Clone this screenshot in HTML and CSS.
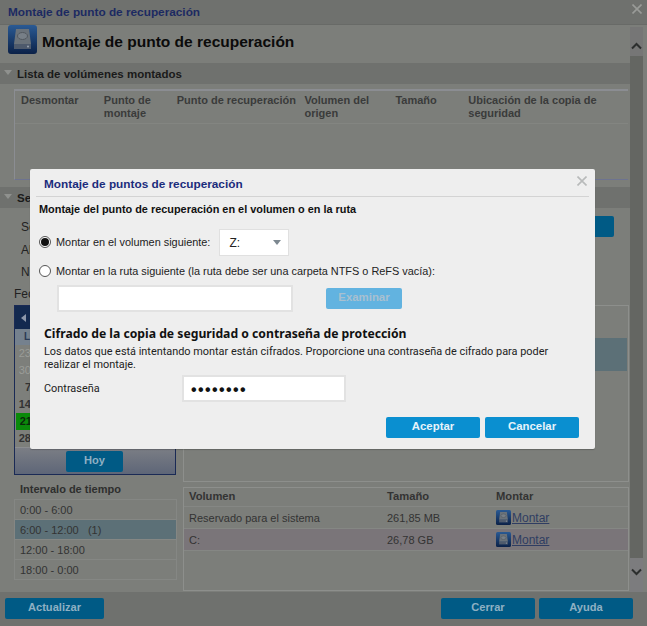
FILE: index.html
```html
<!DOCTYPE html>
<html lang="es">
<head>
<meta charset="utf-8">
<title>Montaje de punto de recuperación</title>
<link rel="stylesheet" href="styles.css">
</head>
<body>
<svg width="0" height="0" class="defs">
  <defs>
    <linearGradient id="ig" x1="0" y1="0" x2="0" y2="1"><stop offset="0" stop-color="#2a5a94"/><stop offset="1" stop-color="#0b2148"/></linearGradient>
    <symbol id="drive" viewBox="0 0 29 29">
      <rect width="29" height="29" rx="3" fill="url(#ig)"/>
      <path d="M8 4h13l2 15H6z" fill="#6a727a"/>
      <path d="M6 19h17v5H6z" fill="#4e5a6c"/>
      <ellipse cx="14.500" cy="11" rx="5" ry="3.500" fill="#777f87" stroke="#52585f"/>
      <circle cx="20" cy="21.500" r="1" fill="#9aa4b0"/>
    </symbol>
  </defs>
</svg>
<div class="window">
  <div class="titlebar">
    <span class="titlebar-text">Montaje de punto de recuperación</span>
    <svg class="close-x" width="10" height="10" viewBox="0 0 10 10"><path d="M.5 .5l9 9M9.500 .5l-9 9" stroke="#999b98" stroke-width="1.600"/></svg>
  </div>
  <div class="main">
    <div class="content">
      <div class="page-head">
        <svg class="page-icon" width="29" height="29"><use href="#drive"/></svg>
        <h1 class="page-title">Montaje de punto de recuperación</h1>
      </div>
      <div class="section-bar"><span class="tri"></span><span>Lista de volúmenes montados</span></div>
      <div class="mounted">
        <div class="mounted-head">
          <div class="c1">Desmontar</div>
          <div class="c2">Punto de montaje</div>
          <div class="c3">Punto de recuperación</div>
          <div class="c4">Volumen del origen</div>
          <div class="c5">Tamaño</div>
          <div class="c6">Ubicación de la copia de seguridad</div>
        </div>
      </div>
      <div class="section-bar second"><span class="tri"></span><span>Seleccionar</span></div>
      <div class="form-rows">
        <div class="form-row">Se<span class="form-btn"></span></div>
        <div class="form-row">Al</div>
        <div class="form-row">N</div>
      </div>
      <div class="browse">
        <div class="left-col">
          <div class="fec">Fecha</div>
          <div class="calendar">
            <div class="cal-head"><span class="cal-arrow"></span></div>
            <div class="cal-days">L</div>
            <div class="cal-row muted">23</div>
            <div class="cal-row muted">30</div>
            <div class="cal-row">7</div>
            <div class="cal-row">14</div>
            <div class="cal-row today">21</div>
            <div class="cal-row">28</div>
            <div class="cal-foot"><span class="btn-dim hoy">Hoy</span></div>
          </div>
          <div class="interval-title">Intervalo de tiempo</div>
          <div class="intervals">
            <div class="interval">0:00 - 6:00</div>
            <div class="interval selected">6:00 - 12:00 &nbsp; (1)</div>
            <div class="interval">12:00 - 18:00</div>
            <div class="interval">18:00 - 0:00</div>
          </div>
        </div>
        <div class="right-col">
          <div class="points"><div class="points-sel"></div></div>
          <div class="volumes">
            <div class="vol-row vol-head"><span class="v1">Volumen</span><span class="v2">Tamaño</span><span class="v3">Montar</span></div>
            <div class="vol-row"><span class="v1">Reservado para el sistema</span><span class="v2">261,85 MB</span><span class="v3 mount"><svg width="15" height="15"><use href="#drive"/></svg><u>Montar</u></span></div>
            <div class="vol-row alt"><span class="v1">C:</span><span class="v2">26,78 GB</span><span class="v3 mount"><svg width="15" height="15"><use href="#drive"/></svg><u>Montar</u></span></div>
          </div>
        </div>
      </div>
    </div>
    <div class="scrollbar">
      <div class="sb-btn up"><svg width="11" height="8" viewBox="0 0 11 8"><path d="M1 6.500l4.500-4.500 4.500 4.500" fill="none" stroke="#2c2e2e" stroke-width="2"/></svg></div>
      <div class="sb-thumb"></div>
      <div class="sb-btn down"><svg width="11" height="8" viewBox="0 0 11 8"><path d="M1 1.500l4.500 4.500 4.500-4.500" fill="none" stroke="#2c2e2e" stroke-width="2"/></svg></div>
    </div>
  </div>
  <div class="footer">
    <span class="btn-dim wide">Actualizar</span>
    <span class="footer-right"><span class="btn-dim wide">Cerrar</span><span class="btn-dim wide">Ayuda</span></span>
  </div>
</div>

<div class="modal">
  <div class="modal-head">
    <span class="modal-title">Montaje de puntos de recuperación</span>
    <svg class="modal-x" width="10" height="10" viewBox="0 0 10 10"><path d="M.5 .5l9 9M9.500 .5l-9 9" stroke="#b8baba" stroke-width="1.600"/></svg>
  </div>
  <div class="modal-sub">Montaje del punto de recuperación en el volumen o en la ruta</div>
  <div class="opt-vol">
    <span class="radio on"></span><span>Montar en el volumen siguiente:</span>
    <span class="select"><span>Z:</span><span class="caret"></span></span>
  </div>
  <div class="opt-path"><span class="radio"></span><span>Montar en la ruta siguiente (la ruta debe ser una carpeta NTFS o ReFS vacía):</span></div>
  <div class="path-row">
    <span class="text-box path-box"></span>
    <span class="btn disabled">Examinar</span>
  </div>
  <h2 class="enc-title">Cifrado de la copia de seguridad o contraseña de protección</h2>
  <p class="enc-text">Los datos que está intentando montar están cifrados. Proporcione una contraseña de cifrado para poder realizar el montaje.</p>
  <div class="pass-row">
    <span class="pass-label">Contraseña</span>
    <span class="text-box pass-box">••••••••</span>
  </div>
  <div class="modal-actions">
    <span class="btn">Aceptar</span>
    <span class="btn">Cancelar</span>
  </div>
</div>
</body>
</html>
```

FILE: styles.css
```css
* { box-sizing: border-box; }
html, body { margin: 0; height: 100%; overflow: hidden; }
body { font-family: "Liberation Sans", Arial, sans-serif; font-size: 11px; color: #333; background: #7c7e7a; }
.defs { position: absolute; }

.window { width: 647px; height: 626px; display: flex; flex-direction: column; background: #7c7e7a; }
.titlebar { height: 25px; flex: none; display: flex; align-items: center; justify-content: space-between; padding: 0 5px 0 8px; background: #6f716e; border-bottom: 1px solid #686a67; }
.titlebar-text { font-weight: 700; font-size: 11.800px; color: #1c2a62; }
.close-x { align-self: flex-start; margin-top: 4px; }
.main { flex: 1; min-height: 0; display: flex; padding-right: 4px; }
.content { flex: 1; min-width: 0; }

.page-head { height: 38px; display: flex; align-items: flex-start; gap: 5px; padding-left: 8px; }
.page-title { margin: 7px 0 0; font-size: 15.500px; line-height: 19px; font-weight: 700; color: #0b0b0b; }
.section-bar { height: 21px; display: flex; align-items: center; gap: 5px; padding-left: 4px; background: #6f716e; font-weight: 700; font-size: 11.500px; color: #1a1a1a; }
.section-bar.second { margin-top: 7px; }
.tri { width: 0; height: 0; border-left: 4px solid transparent; border-right: 4px solid transparent; border-top: 5px solid #8f918e; margin-top: -2px; }

.mounted { margin: 5px 2px 0 14px; height: 91px; border: 1px solid #8b8d92; border-top-width: 2px; border-bottom-color: #6d7390; border-right: 0; }
.mounted-head { height: 33px; display: flex; border-bottom: 1px solid #838581; padding-top: 3px; font-weight: 700; font-size: 11px; line-height: 13px; color: #3a3b3a; }
.c1 { width: 89px; padding-left: 6px; }
.c2 { width: 73px; }
.c3 { width: 128px; }
.c4 { width: 91px; padding-right: 20px; }
.c5 { width: 73px; }
.c6 { width: 160px; }

.form-rows { height: 98px; padding: 8px 0 0 21px; }
.form-row { height: 22.500px; line-height: 22px; display: flex; justify-content: space-between; color: #222; font-size: 12px; }
.form-btn { width: 60px; height: 21px; margin: 0 16px 0 0; background: #005a85; border-radius: 2px; }

.browse { display: flex; gap: 7px; margin-top: -1px; padding-right: 1px; }
.left-col { width: 162px; margin-left: 14px; position: relative; }
.fec { position: absolute; top: -18px; left: 0; color: #222; font-size: 12px; }
.calendar { height: 170px; border: 1px solid #1a2a55; display: flex; flex-direction: column; background: #7d7f7b; }
.cal-head { height: 23px; background: #13294f; display: flex; align-items: center; padding-left: 6px; }
.cal-arrow { width: 0; height: 0; border-top: 4px solid transparent; border-bottom: 4px solid transparent; border-right: 5px solid #8d97aa; }
.cal-days { height: 16px; background: #75818e; color: #2b3a55; font-size: 10px; font-weight: 700; line-height: 15px; padding-left: 9px; }
.cal-row { height: 17px; line-height: 17px; font-weight: 700; font-size: 11px; color: #333; text-align: right; padding-right: 144px; }
.cal-row.muted { color: #9a9c98; font-weight: 400; }
.cal-row.today { background: #0a8a0a; color: #0a2a0a; margin-left: 1px; padding-right: 143px; }
.cal-foot { flex: 1; display: flex; justify-content: center; align-items: center; background: linear-gradient(#7b7e85, #5e6678); border-top: 1px solid #8b8d90; padding-right: 1px; }
.btn-dim { display: flex; align-items: center; justify-content: center; height: 21px; padding-bottom: 3px; background: #005a85; border-radius: 2px; color: #8eb0c3; font-weight: 700; font-size: 11.100px; }
.hoy { width: 57px; }
.interval-title { margin: 7px 0 0 6px; height: 17px; line-height: 15px; font-weight: 700; font-size: 11px; color: #2e2f2e; }
.intervals { border: 1px solid #858784; border-bottom: 0; margin-right: -1px; }
.interval { height: 20px; line-height: 20px; padding-left: 5px; border-bottom: 1px solid #858784; color: #333; font-size: 11px; }
.interval.selected { background: #5c7077; }

.right-col { flex: 1; min-width: 0; display: flex; flex-direction: column; gap: 5px; }
.points { height: 177px; border: 1px solid #8d8f8c; padding-top: 32px; }
.points-sel { height: 33px; background: #5c7077; margin-right: 1px; }
.volumes { height: 104px; border: 1px solid #8d8f8c; }
.vol-row { height: 22px; display: flex; align-items: center; padding-left: 5px; border-bottom: 1px solid #858784; color: #333; font-size: 11px; }
.vol-head { height: 19px; font-weight: 700; font-size: 11.200px; padding-bottom: 2px; }
.vol-row.alt { background: #7a7579; }
.v1 { width: 198px; }
.v2 { width: 109px; }
.mount { display: flex; align-items: center; gap: 1px; color: #2f3d62; font-size: 12px; }

.scrollbar { width: 13px; margin-top: 2px; height: 565px; display: flex; flex-direction: column; }
.sb-btn { background: #7f7f7f; display: flex; justify-content: center; }
.sb-btn.up { height: 29px; padding-top: 15px; background: #767676; }
.sb-btn.down { height: 34px; padding-top: 10px; background: #7c7c7e; }
.sb-thumb { flex: 1; background: #646662; }

.footer { height: 34px; flex: none; display: flex; justify-content: space-between; padding: 6px 14px 0 5px; background: #6f716e; }
.footer-right { display: flex; gap: 4px; }
.wide { width: 99px; }
.footer-right .wide { width: 94px; }

.modal { position: absolute; left: 30px; top: 169px; width: 565px; height: 280px; background: #eee; border-radius: 2px; box-shadow: 0 1px 1px rgba(0,0,0,.2); color: #222; }
.modal-head { height: 28px; margin: 0 6px; padding: 3px 2px 0 8px; display: flex; justify-content: space-between; align-items: center; border-bottom: 1px solid #d3d3d3; }
.modal-x { align-self: flex-start; margin-top: 4px; }
.modal-title { font-weight: 700; font-size: 11.800px; color: #1b2c7c; }
.modal-sub { margin: 5px 0 0 9px; font-weight: 700; font-size: 10.900px; line-height: 14px; color: #111; }
.opt-vol { display: flex; align-items: center; margin: 13px 0 0 9px; height: 26px; gap: 5px; font-size: 10.900px; }
.radio { width: 12px; height: 12px; border: 1px solid #555; border-radius: 50%; background: #fff; display: inline-flex; align-items: center; justify-content: center; flex: none; }
.radio.on::after { content: ""; width: 8px; height: 8px; border-radius: 50%; background: #111; }
.select { width: 70px; height: 27px; margin-left: 4px; align-self: flex-start; background: #fff; border: 1px solid #e0e0e0; display: flex; align-items: center; justify-content: space-between; padding: 0 4px 0 9px; font-size: 12px; }
.caret { width: 0; height: 0; border-left: 4px solid transparent; border-right: 4px solid transparent; border-top: 5px solid #7d8890; margin-right: 3px; }
.opt-path { display: flex; align-items: center; gap: 5px; margin: 8px 0 0 9px; height: 15px; font-size: 10.900px; }
.path-row { display: flex; align-items: center; margin: 7px 0 0 27px; gap: 33px; }
.text-box { display: block; background: #fff; border: 2px solid #e2e2e2; }
.path-box { width: 236px; height: 27px; }
.btn { display: flex; align-items: center; justify-content: center; width: 94px; height: 21px; padding-bottom: 3px; background: #0a8fd0; border-radius: 2px; color: #e6f3fa; font-weight: 700; font-size: 11.400px; }
.btn.disabled { width: 76px; background: #62b3e0; color: #a8c0d0; }
.enc-title { margin: 14px 0 0 14px; font-family: "Noto Sans", sans-serif; font-size: 12.200px; line-height: 15px; font-weight: 700; color: #111; }
.enc-text { margin: 4px 0 0 14px; width: 520px; font-family: Roboto, sans-serif; font-size: 10.900px; line-height: 13px; color: #222; }
.pass-row { display: flex; align-items: center; margin: 4px 0 0 14px; }
.pass-label { width: 138px; font-family: Roboto, sans-serif; font-size: 10.900px; }
.pass-box { width: 164px; height: 27px; padding-left: 7px; font-size: 16px; line-height: 25px; font-weight: 700; color: #111; letter-spacing: 1.400px; }
.modal-actions { display: flex; justify-content: flex-end; gap: 5px; margin: 15px 16px 0 0; }
```
